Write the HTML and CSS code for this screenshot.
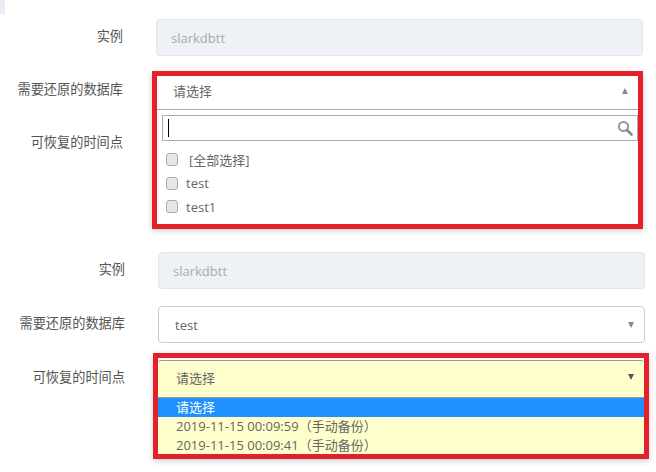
FILE: index.html
```html
<!DOCTYPE html>
<html lang="zh-CN">
<head>
  <meta charset="UTF-8" />
  <meta name="viewport" content="width=device-width, initial-scale=1" />
  <title>还原数据库</title>
  <link rel="stylesheet" href="styles.css">
</head>
<body>

  <div class="edge"></div>

  <!-- first step: database list open -->
  <form class="restore-form form-top" autocomplete="off">
    <div class="row">
      <label class="row-label">实例</label>
      <div class="field">
        <input class="text-input" type="text" value="slarkdbtt" disabled />
      </div>
    </div>

    <div class="row">
      <label class="row-label">需要还原的数据库</label>
      <div class="field">
        <div class="mark mark-db">
          <div class="db-head">
            <span>请选择</span>
            <i class="arrow arrow-up"></i>
          </div>
          <div class="db-search">
            <span class="caret"></span>
            <svg class="search-icon" width="16" height="16" viewBox="0 0 16 16">
              <circle cx="6.5" cy="6.5" r="4.6" fill="none" stroke="#999" stroke-width="2" />
              <path d="M10 10l4.5 4.5" stroke="#888" stroke-width="2.6" stroke-linecap="round" />
            </svg>
          </div>
          <ul class="db-list">
            <li class="db-all"><input type="checkbox" /><span>[全部选择]</span></li>
            <li><input type="checkbox" /><span>test</span></li>
            <li><input type="checkbox" /><span>test1</span></li>
          </ul>
        </div>
      </div>
    </div>

    <div class="row">
      <label class="row-label">可恢复的时间点</label>
      <div class="field"></div>
    </div>
  </form>

  <!-- second step: restore point list open -->
  <form class="restore-form form-bottom" autocomplete="off">
    <div class="row">
      <label class="row-label">实例</label>
      <div class="field">
        <input class="text-input" type="text" value="slarkdbtt" disabled />
      </div>
    </div>

    <div class="row">
      <label class="row-label">需要还原的数据库</label>
      <div class="field">
        <div class="select-box">
          <span>test</span>
          <i class="arrow arrow-down"></i>
        </div>
      </div>
    </div>

    <div class="row">
      <label class="row-label">可恢复的时间点</label>
      <div class="field">
        <div class="mark mark-time">
          <div class="time-head">
            <span>请选择</span>
            <i class="arrow arrow-dark"></i>
          </div>
          <ul class="time-list">
            <li class="selected">请选择</li>
            <li>2019-11-15 00:09:59（手动备份）</li>
            <li>2019-11-15 00:09:41（手动备份）</li>
          </ul>
        </div>
      </div>
    </div>
  </form>

</body>
</html>
```

FILE: styles.css
```css
/* Base styles */
body {
  margin: 0;
  background: #fff;
  color: #666;
  font-family: "Open Sans", "Noto Sans CJK SC", sans-serif;
  font-size: 13px;
}

.edge {
  position: absolute;
  top: 0;
  left: 0;
  width: 5px;
  height: 14px;
  background: #e9edf3;
}

.restore-form {
  display: flex;
  flex-direction: column;
}

.form-top {
  padding-top: 19px;
  gap: 16px;
}

.form-bottom {
  margin-top: 90px;
  padding-left: 2px;
  padding-bottom: 75px;
  gap: 17px;
}

.row {
  display: flex;
  height: 37px;
}

.row-label {
  width: 123px;
  padding-top: 7px;
  line-height: 20px;
  font-size: 13.2px;
  text-align: right;
  color: #555;
}

.field {
  position: relative;
  width: 487px;
  margin-left: 33px;
}

.text-input {
  display: block;
  width: 100%;
  height: 37px;
  padding: 0 14px;
  box-sizing: border-box;
  border: 1px solid #e2e5e8;
  border-radius: 4px;
  background: #eef1f5;
  color: #aaa;
  font: inherit;
}

.select-box {
  display: flex;
  align-items: center;
  justify-content: space-between;
  height: 37px;
  padding: 0 10px 0 16px;
  box-sizing: border-box;
  border: 1px solid #ccc;
  border-radius: 4px;
}

/* Select arrows */
.arrow {
  width: 0;
  height: 0;
  border-left: 3.5px solid transparent;
  border-right: 3.5px solid transparent;
}

.arrow-up {
  border-bottom: 6px solid #888;
}

.arrow-down {
  border-top: 6px solid #888;
}

.arrow-dark {
  border-top: 6px solid #555;
}

/* Red annotation boxes, these hang over the rows below */
.mark {
  position: absolute;
  z-index: 2;
  box-sizing: border-box;
  border: 5px solid #e3202b;
  background: #fff;
  box-shadow: 0 2px 6px rgba(0,0,0,0.2);
}

.mark-db {
  top: -1px;
  left: -4px;
  width: 491px;
  height: 158px;
}

.db-head {
  display: flex;
  align-items: center;
  justify-content: space-between;
  height: 34px;
  padding: 0 10px 4px 16px;
  box-sizing: border-box;
  border-bottom: 1px solid #aaa;
}

.db-search {
  display: flex;
  align-items: center;
  justify-content: space-between;
  width: 476px;
  height: 26px;
  margin: 5px 0 0 5px;
  padding: 0 4px 0 5px;
  box-sizing: border-box;
  border: 1px solid #aaa;
}

.caret {
  width: 1px;
  height: 18px;
  background: #000;
}

.db-list {
  list-style: none;
  margin: 7px 0 0;
  padding: 0;
}

.db-list li {
  display: flex;
  align-items: center;
  height: 23.5px;
  padding-left: 9px;
}

.db-list input {
  appearance: none;
  width: 12px;
  height: 13px;
  margin: 0 8px 0 0;
  border: 1px solid #aaa;
  border-radius: 3px;
  background: #e6e6e6;
}

.db-all span {
  margin-left: 3px;
}

.mark-time {
  top: -7px;
  left: -5px;
  width: 496px;
  height: 106px;
  padding-top: 2px;
}

.time-head {
  display: flex;
  align-items: center;
  justify-content: space-between;
  height: 37px;
  padding: 0 10px 4px 18px;
  box-sizing: border-box;
  border-top: 1px solid #999;
  border-radius: 3px 3px 0 0;
  background: #ffc;
}

.time-list {
  list-style: none;
  margin: 0;
  padding: 0;
  border-top: 1px solid #999;
  background: #ffc;
}

.time-list li {
  height: 18.5px;
  padding-left: 18px;
  line-height: 18.5px;
}

.time-list .selected {
  height: 19px;
  background: #1e90ff;
  color: #fff;
}
```
